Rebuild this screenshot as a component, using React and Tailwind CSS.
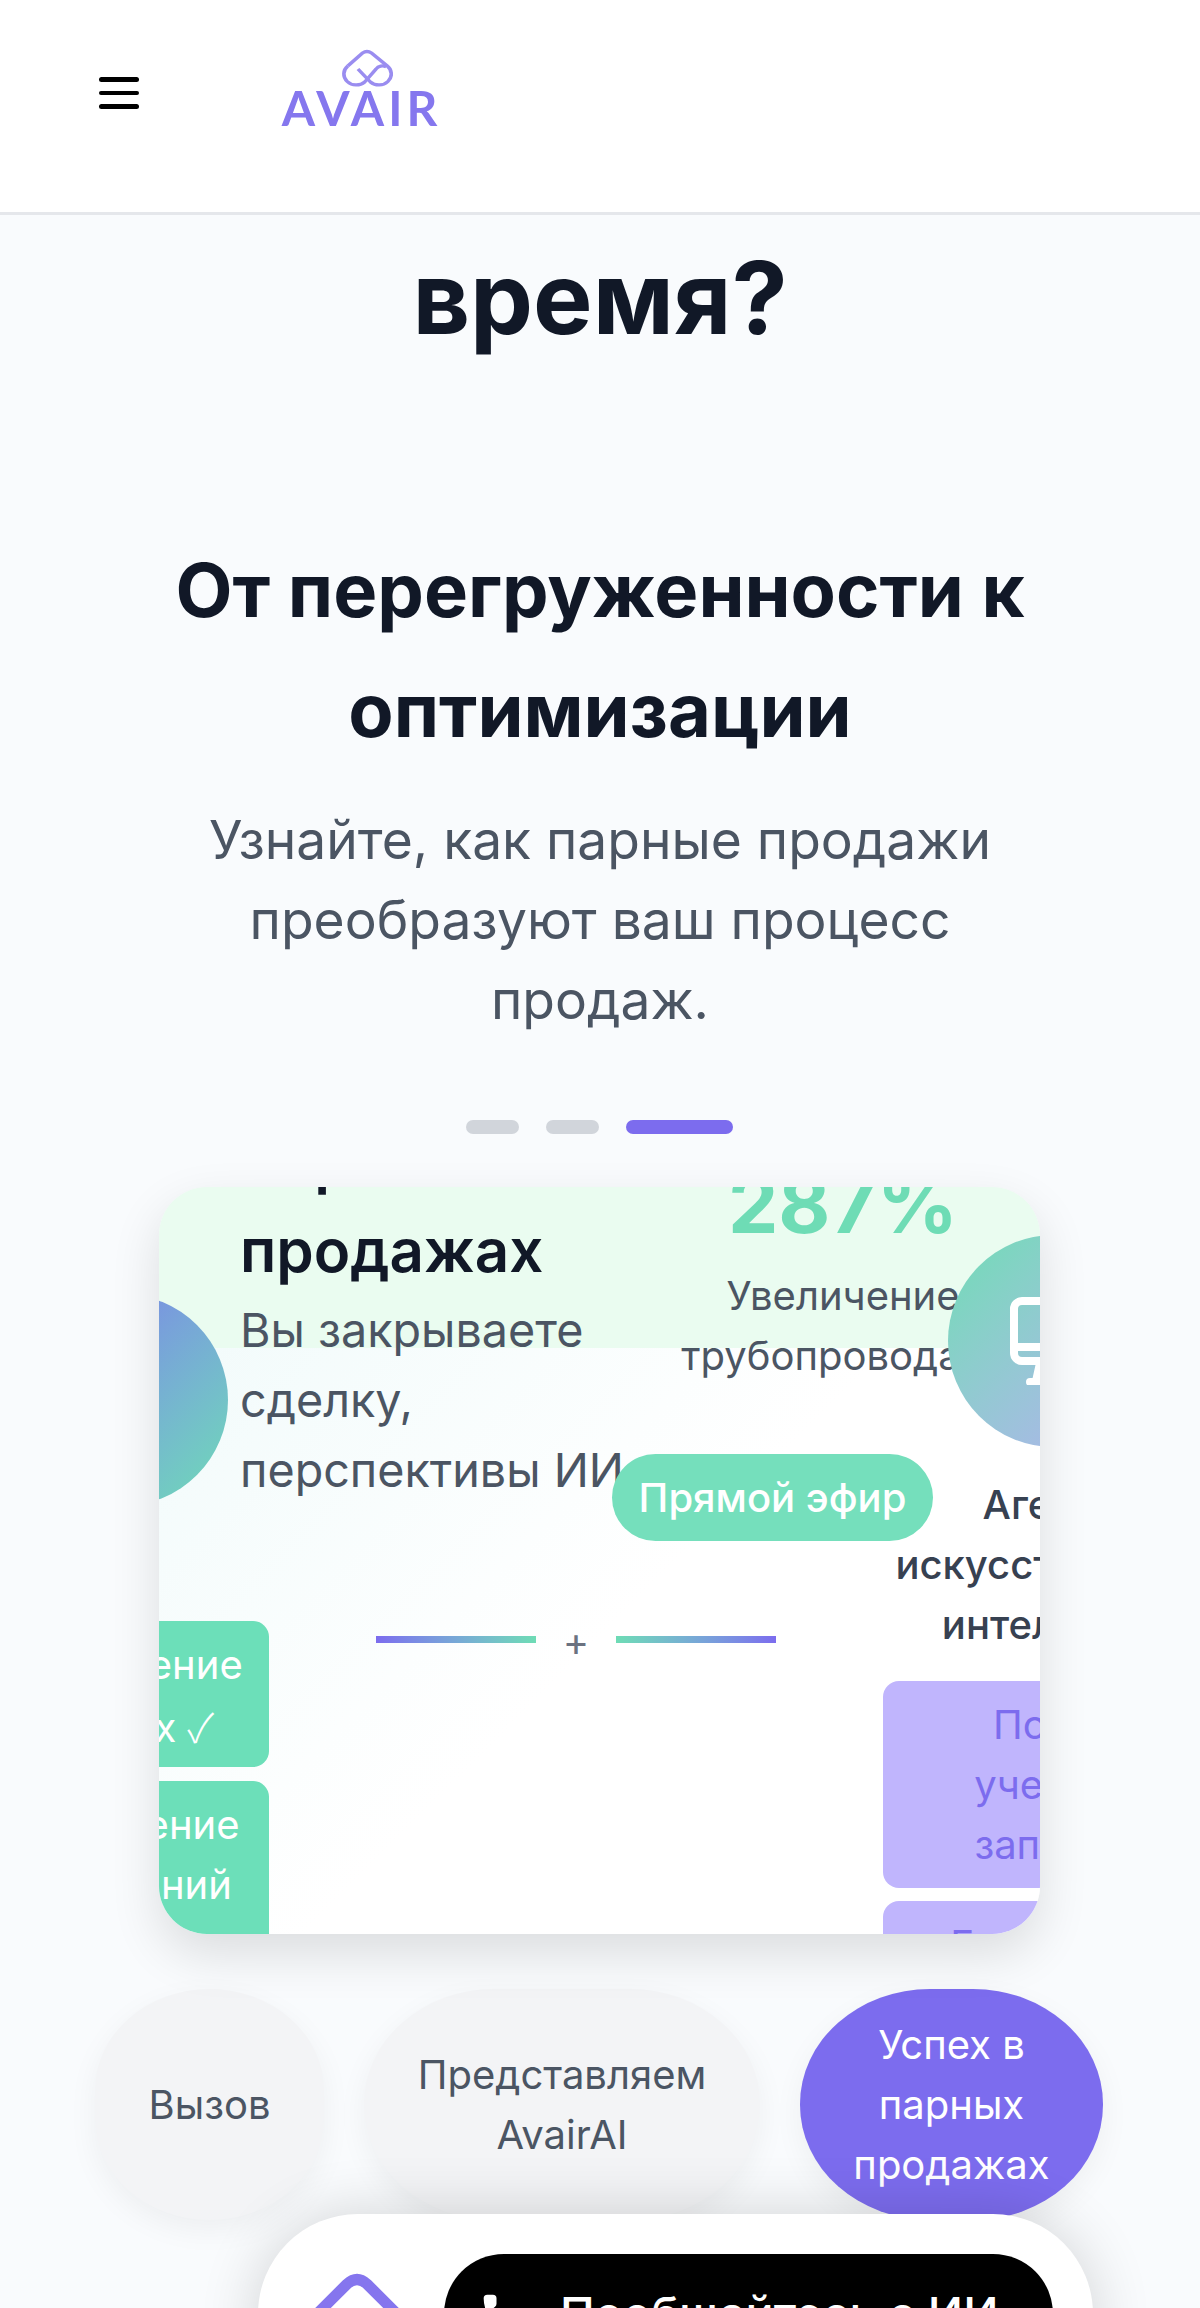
import { Phone } from "lucide-react";

function AvairMark() {
  return (
    <svg width="52" height="39" viewBox="0 0 46 39" fill="none" stroke="#9a8df0" strokeWidth="3.2" preserveAspectRatio="none" className="block">
      <path d="M6 17 L19 4 Q23 1 27 4 L41 17 A10.5 10.5 0 0 1 26 33 L15 20" />
      <path d="M6 17 A10.5 10.5 0 0 0 21 33 L31 20 A6.5 6.5 0 0 1 40 18" />
    </svg>
  );
}

function Tab({ className, children }) {
  return (
    <div className={`h-[231px] rounded-[130px/115px] flex items-center justify-center text-center text-[40px] leading-[60px] shadow-[0_10px_30px_rgba(0,0,0,0.05)] ${className}`}>
      {children}
    </div>
  );
}

export default function App() {
  return (
    <div className="relative h-[2308px] overflow-hidden bg-[#f9fbfd] font-['Inter',sans-serif]">
      <header className="h-[215px] bg-white border-b-[3px] border-[#e5e7eb] flex items-start pl-[99px] pt-[77px]">
        <div className="w-[40px] flex flex-col gap-[9px]">
          <div className="h-[4.5px] rounded-full bg-black" />
          <div className="h-[4.5px] rounded-full bg-black" />
          <div className="h-[4.5px] rounded-full bg-black" />
        </div>
        <div className="ml-[146px] -mt-[28px] w-[153px] flex flex-col items-center blur-[0.5px]">
          <div className="ml-[10px]"><AvairMark /></div>
          <span className="font-['Lato',sans-serif] font-bold text-[48px] leading-[40px] tracking-[4px] text-[#8577ee]">AVAIR</span>
        </div>
      </header>

      <main>
        <h1 className="mt-[25px] text-center text-[100px] leading-[116px] font-bold text-[#111827]">время?</h1>
        <h2 className="mt-[174px] mx-auto w-[900px] text-center text-[74px] leading-[120px] font-bold text-[#111827]">
          От перегруженности к оптимизации
        </h2>
        <p className="mt-[30px] mx-auto w-[800px] text-center text-[53.33px] leading-[80px] text-[#4b5563]">
          Узнайте, как парные продажи преобразуют ваш процесс продаж.
        </p>

        <div className="mt-[80px] flex justify-center gap-[27px] pr-[1px]">
          <div className="w-[53px] h-[14px] rounded-full bg-[#d1d5db]" />
          <div className="w-[53px] h-[14px] rounded-full bg-[#d1d5db]" />
          <div className="w-[107px] h-[14px] rounded-full bg-[#7c6cee]" />
        </div>

        {/* carousel card, content is wider than the card and gets cut */}
        <div className="relative mt-[53px] ml-[159px] w-[881px] h-[747px] rounded-[48px] overflow-hidden shadow-[0_20px_50px_rgba(0,0,0,0.12)] bg-[linear-gradient(to_bottom,#eafcf0_161px,transparent_161px),linear-gradient(135deg,#effafa,#ffffff_55%)]">
          <div className="flex -ml-[184px] w-[1250px]">
            <div className="w-[294px] shrink-0 flex flex-col items-center">
              <div className="mt-[107px] w-[212px] h-[212px] rounded-full bg-gradient-to-br from-[#7c6cee] to-[#6edcb5]" />
              <div className="mt-[115px] w-full flex flex-col gap-[14px] text-white text-[40px] leading-[60px] text-center">
                <div className="h-[146px] pt-[14px] rounded-[16px] bg-[#6cdfb9]">Обновление<br />данных <span className="font-['Noto_Sans_CJK_JP',sans-serif] font-light">✓</span></div>
                <div className="h-[170px] pt-[14px] rounded-[16px] bg-[#6cdfb9]">Назначение<br />совещаний</div>
              </div>
            </div>

            <div className="w-[614px] shrink-0">
              <div className="flex -ml-[29px] -mt-[72px]">
                <div className="w-[400px] shrink-0">
                  <h3 className="text-[60px] leading-[90px] font-semibold text-[#111827] whitespace-nowrap">Управление в<br />продажах</h3>
                  <p className="text-[46.67px] leading-[70px] text-[#4b5563]">Вы закрываете сделку, перспективы ИИ</p>
                </div>
                <div className="w-[406px] shrink-0 text-center pt-[49px]">
                  <div className="text-[80px] leading-[80px] font-bold text-[#6edcb5]">287%</div>
                  <p className="mt-[21.5px] text-[40px] leading-[60px] text-[#4b5563]">
                    Увеличение
                    <span className="block pr-[44px]">трубопровода</span>
                  </p>
                </div>
              </div>
              <div className="mt-[131px] ml-[107px] w-[400px] h-[7px] flex items-center justify-between">
                <div className="w-[160px] h-[7px] bg-gradient-to-r from-[#7c6cee] to-[#6edcb5]" />
                <span className="text-[40px] leading-none text-[#6b7280] translate-y-[2px]">+</span>
                <div className="w-[160px] h-[7px] bg-gradient-to-r from-[#6edcb5] to-[#7c6cee]" />
              </div>
            </div>

            <div className="relative w-[342px] shrink-0 flex flex-col items-center">
              <div className="mt-[48px] w-[212px] h-[212px] rounded-full bg-gradient-to-br from-[#6edcb5] to-[#b3aef2] flex items-center justify-center">
                <svg width="88" height="88" viewBox="0 0 88 88" fill="none" stroke="white" strokeWidth="8" strokeLinecap="round" strokeLinejoin="round">
                  <rect x="4" y="4" width="80" height="60" rx="8" />
                  <path d="M4 50 H84" />
                  <path d="M30 66 L26 84 M20 85 H68 M58 66 L62 84" />
                </svg>
              </div>
              <p className="mt-[28px] text-center text-[40px] leading-[60px] font-medium text-[#374151]">Агенты<br />искусственного<br />интеллекта</p>
              <div className="mt-[26px] w-full flex flex-col gap-[13px] text-[#7c6cee] text-[40px] leading-[60px] text-center">
                <div className="h-[207px] pt-[14px] rounded-[16px] bg-[#c0b5fd]">Поиск<br />учетной<br />записей</div>
                <div className="h-[207px] pt-[14px] rounded-[16px] bg-[#c0b5fd]">Генерация писем</div>
              </div>
            </div>
          </div>

          <div className="absolute left-[453px] top-[267px] w-[321px] h-[87px] rounded-full bg-[#75dfbc] text-white text-[40px] font-medium flex items-center justify-center">
            Прямой эфир
          </div>
        </div>

        <div className="mt-[55px] ml-[95px] flex gap-[40px]">
          <Tab className="w-[229px] bg-[#f3f4f6] text-[#4b5563]">Вызов</Tab>
          <Tab className="w-[396px] bg-[#f3f4f6] text-[#4b5563]">Представляем<br />AvairAI</Tab>
          <Tab className="w-[303px] bg-[#7c6cee] text-white">Успех в<br />парных<br />продажах</Tab>
        </div>
      </main>

      {/* floating call widget */}
      <div className="absolute left-[258px] top-[2214px] w-[835px] h-[220px] rounded-[100px] bg-white shadow-[0_0_60px_rgba(0,0,0,0.16)] flex items-start">
        <svg width="100" height="40" viewBox="0 0 100 40" fill="none" className="ml-[49px] mt-[59px] shrink-0">
          <path d="M5 46 L40 11 Q50 2 60 11 L95 46" stroke="#8575ee" strokeWidth="11" />
          <path d="M20 48 Q33 28 50 42 Q67 28 80 48 Z" fill="#8575ee" />
        </svg>
        <div className="ml-[37px] mt-[40px] w-[609px] h-[120px] rounded-[70px] bg-black text-white flex items-center pl-[36px] gap-[36px]">
          <Phone size={44} fill="white" strokeWidth={0} className="shrink-0 -mt-[2px]" />
          <span className="text-[46.67px] font-medium whitespace-nowrap">Пообщайтесь с ИИ</span>
        </div>
      </div>
    </div>
  );
}
